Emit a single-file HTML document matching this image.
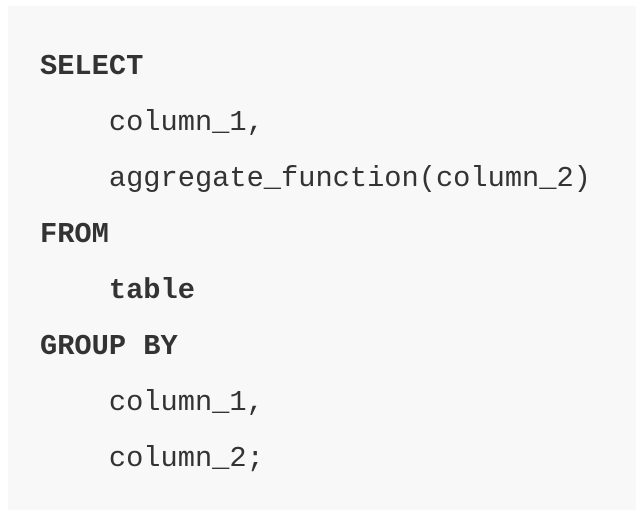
<!DOCTYPE html>
<html><head><style>
html,body{margin:0;padding:0;background:#fff;width:636px;height:514px;overflow:hidden}
.box{position:absolute;left:8px;top:6px;width:628px;height:504px;background:#f8f8f8}
pre{position:absolute;left:40px;top:39px;margin:0;font-family:"Liberation Mono",monospace;font-size:28.7px;line-height:56px;color:#333}
b{font-weight:bold;color:#333}
</style></head><body>
<div class="box"></div>
<pre><b>SELECT</b>
    column_1,
    aggregate_function(column_2)
<b>FROM</b>
    <b>table</b>
<b>GROUP BY</b>
    column_1,
    column_2;</pre>
</body></html>
